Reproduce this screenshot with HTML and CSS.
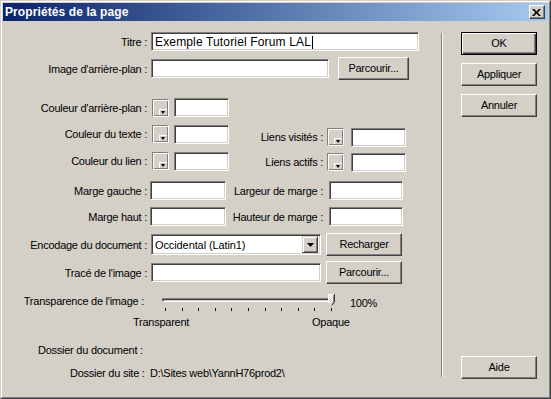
FILE: index.html
```html
<!DOCTYPE html>
<html lang="fr">
<head>
<meta charset="utf-8">
<title>Propriétés de la page</title>
<link rel="stylesheet" href="styles.css">
</head>
<body>
<div class="window">
  <div class="frame">
    <div class="titlebar">
      <span class="title">Propriétés de la page</span>
      <div class="close">
        <svg width="9" height="7" viewBox="0 0 9 7"><path d="M0 0h2.2l2.3 2.4 2.3-2.4H9L5.7 3.5 9 7H6.8L4.5 4.6 2.2 7H0l3.3-3.5z" fill="#000"/></svg>
      </div>
    </div>
    <div class="client">
      <div class="main">
        <div class="row r1">
          <span class="lbl">Titre :</span>
          <div class="field f-title">Exemple Tutoriel Forum LAL<span class="caret"></span></div>
        </div>
        <div class="row r2">
          <span class="lbl">Image d'arrière-plan :</span>
          <div class="field f-img"></div>
          <div class="btn b-browse1">Parcourir...</div>
        </div>
        <div class="row r3">
          <span class="lbl">Couleur d'arrière-plan :</span>
          <div class="swatch"><span class="sw-arrow"></span></div>
          <div class="field f-color"></div>
        </div>
        <div class="row r4 top">
          <span class="lbl">Couleur du texte :</span>
          <div class="swatch"><span class="sw-arrow"></span></div>
          <div class="field f-color"></div>
          <div class="group g-down3">
            <span class="lbl2">Liens visités :</span>
            <div class="swatch"><span class="sw-arrow"></span></div>
            <div class="field f-color f-color2"></div>
          </div>
        </div>
        <div class="row r5 top">
          <span class="lbl">Couleur du lien :</span>
          <div class="swatch"><span class="sw-arrow"></span></div>
          <div class="field f-color"></div>
          <div class="group g-down1">
            <span class="lbl2">Liens actifs :</span>
            <div class="swatch"><span class="sw-arrow"></span></div>
            <div class="field f-color f-color2"></div>
          </div>
        </div>
        <div class="row r6">
          <span class="lbl">Marge gauche :</span>
          <div class="field f-margin"></div>
          <span class="lbl3">Largeur de marge :</span>
          <div class="field f-margin2"></div>
        </div>
        <div class="row r7">
          <span class="lbl">Marge haut :</span>
          <div class="field f-margin"></div>
          <span class="lbl3">Hauteur de marge :</span>
          <div class="field f-margin2"></div>
        </div>
        <div class="row r8">
          <span class="lbl">Encodage du document :</span>
          <div class="field select">
            <span class="sel-text">Occidental (Latin1)</span>
            <span class="sel-btn"><svg width="7" height="4" viewBox="0 0 7 4"><path d="M0 0h7L3.5 4z" fill="#000"/></svg></span>
          </div>
          <div class="btn b-side">Recharger</div>
        </div>
        <div class="row r9">
          <span class="lbl">Tracé de l'image :</span>
          <div class="field f-trace"></div>
          <div class="btn b-side">Parcourir...</div>
        </div>
        <div class="row r10 top">
          <span class="lbl lbl-tr">Transparence de l'image :</span>
          <div class="slider">
            <div class="track"></div>
            <div class="ticks">
              <i></i><i></i><i></i><i></i><i></i><i></i><i></i><i></i><i></i><i></i><i></i>
            </div>
            <svg class="thumb" width="7" height="12" viewBox="0 0 7 12">
              <defs>
                <pattern id="dith" width="2" height="2" patternUnits="userSpaceOnUse">
                  <rect width="2" height="2" fill="#D4D0C8"/>
                  <rect width="1" height="1" fill="#fff"/>
                  <rect x="1" y="1" width="1" height="1" fill="#fff"/>
                </pattern>
              </defs>
              <path d="M0.5 0.5H6.5V8.5L3.5 11.5L0.5 8.5Z" fill="url(#dith)"/>
              <path d="M0.5 9V0.5H6" stroke="#fff" fill="none"/>
              <path d="M6.5 0V8.5L3.5 11.5" stroke="#404040" fill="none"/>
              <path d="M5.5 1V8.2L3.5 10.2" stroke="#808080" fill="none"/>
            </svg>
          </div>
          <span class="pct">100%</span>
        </div>
        <div class="row r11">
          <span class="tl">Transparent</span>
          <span>Opaque</span>
        </div>
        <div class="row r12">
          <span>Dossier du document :</span>
        </div>
        <div class="row r13">
          <span class="site-lbl">Dossier du site :</span>
          <span>D:\Sites web\YannH76prod2\</span>
        </div>
      </div>
      <div class="sep"></div>
      <div class="side">
        <div class="btn btn-default b-r1">OK</div>
        <div class="btn b-r2">Appliquer</div>
        <div class="btn b-r2">Annuler</div>
        <div class="btn b-help">Aide</div>
      </div>
    </div>
  </div>
</div>
</body>
</html>
```

FILE: styles.css
```css
* { box-sizing: border-box; }

html, body {
  margin: 0;
  padding: 0;
  background: #D4D0C8;
}

body {
  font-family: "Liberation Sans", Arial, sans-serif;
  font-size: 11px;
  letter-spacing: -0.25px;
  line-height: 14px;
  color: #000;
}

.window {
  width: 551px;
  height: 399px;
  border: 1px solid;
  border-color: #D4D0C8 #404040 #404040 #D4D0C8;
  background: #D4D0C8;
}

.frame {
  height: 100%;
  border: 1px solid;
  border-color: #fff #808080 #808080 #fff;
  padding: 1px;
  display: flex;
  flex-direction: column;
}

.titlebar {
  height: 18px;
  flex: none;
  background: linear-gradient(to right, #0A246A, #A6CAF0);
  display: flex;
  align-items: center;
  padding: 0 3px 0 2px;
}

.title {
  flex: 1;
  color: #fff;
  font-weight: bold;
  font-size: 12px;
  letter-spacing: 0.1px;
}

.close {
  width: 16px;
  height: 14px;
  background: #D4D0C8;
  border: 1px solid;
  border-color: #fff #404040 #404040 #fff;
  box-shadow: inset -1px -1px #808080;
  display: flex;
  align-items: center;
  justify-content: center;
  padding-right: 1px;
}

.client {
  flex: 1;
  display: flex;
}

.main {
  width: 438px;
  display: flex;
  flex-direction: column;
}

.sep {
  width: 2px;
  margin-top: 12px;
  height: 344px;
  border-left: 1px solid #808080;
  border-right: 1px solid #fff;
}

.side {
  margin-left: 18px;
  display: flex;
  flex-direction: column;
  padding-bottom: 17px;
}

/* rows */
.row { display: flex; align-items: center; }
.row.top { align-items: flex-start; }

.r1 { margin-top: 11px; height: 19px; }
.r2 { margin-top: 6px; height: 23px; }
.r3 { margin-top: 18px; }
.r4 { margin-top: 8px; }
.r5 { margin-top: 5px; }
.r6 { margin-top: 9px; }
.r7 { margin-top: 7px; }
.r8 { margin-top: 7px; height: 23px; }
.r9 { margin-top: 5px; height: 23px; }
.r10 { margin-top: 8px; height: 20px; }
.r11 { margin-top: 3px; padding-left: 130px; }
.r12 { margin-top: 14px; padding-left: 35px; }
.r13 { margin-top: 9px; padding-left: 67px; }

.lbl {
  width: 144px;
  text-align: right;
  white-space: nowrap;
  flex: none;
}

.top > .lbl { margin-top: 2px; }

.lbl-tr { width: 141px; margin-top: 2px; }

.lbl2 {
  width: 94px;
  text-align: right;
  white-space: nowrap;
  margin-top: 2px;
}

.lbl3 {
  width: 97px;
  text-align: right;
  white-space: nowrap;
}

.group { display: flex; align-items: flex-start; }
.g-down3 { margin-top: 3px; }
.g-down1 { margin-top: 1px; }

/* fields */
.field {
  height: 19px;
  flex: none;
  background: #fff;
  border: 1px solid;
  border-color: #808080 #fff #fff #808080;
  box-shadow: inset 1px 1px #404040, inset -1px -1px #D4D0C8;
  padding: 1px 3px 0 3px;
  white-space: nowrap;
  display: flex;
  align-items: center;
}

.f-title {
  width: 268px;
  margin-left: 4px;
  font-size: 12px;
  letter-spacing: 0.15px;
}
.f-img { width: 178px; margin-left: 4px; }
.f-color { width: 55px; margin-left: 5px; }
.f-color2 { margin-left: 7px; }
.f-margin { width: 76px; margin-left: 3px; }
.f-margin2 { width: 74px; margin-left: 6px; }
.f-trace { width: 170px; margin-left: 4px; }

.caret {
  display: inline-block;
  width: 1px;
  height: 13px;
  background: #000;
  margin-left: 1px;
}

.select {
  width: 170px;
  height: 21px;
  margin-left: 4px;
  padding: 2px 2px 2px 3px;
}

.sel-text { flex: 1; letter-spacing: -0.1px; }

.sel-btn {
  width: 16px;
  height: 17px;
  background: #D4D0C8;
  border: 1px solid;
  border-color: #D4D0C8 #404040 #404040 #D4D0C8;
  box-shadow: inset 1px 1px #fff, inset -1px -1px #808080;
  display: flex;
  align-items: center;
  justify-content: center;
}

/* swatch */
.swatch {
  width: 17px;
  height: 18px;
  margin-left: 5px;
  flex: none;
  position: relative;
  border: 1px solid;
  border-color: #808080 #fff #fff #808080;
  box-shadow: inset 1px 1px #fff, inset -1px -1px #808080;
  background: #D4D0C8;
}

.group .swatch { margin-left: 4px; }

.sw-arrow {
  position: absolute;
  right: 1px;
  bottom: 1px;
  width: 8px;
  height: 6px;
  background: #D4D0C8;
  border-top: 1px solid #fff;
  border-left: 1px solid #fff;
}

.sw-arrow::after {
  content: "";
  position: absolute;
  left: 1px;
  top: 1px;
  border-left: 2.5px solid transparent;
  border-right: 2.5px solid transparent;
  border-top: 3px solid #000;
}

/* buttons */
.btn {
  height: 23px;
  flex: none;
  background: #D4D0C8;
  border: 1px solid;
  border-color: #fff #404040 #404040 #fff;
  box-shadow: inset -1px -1px #808080;
  display: flex;
  align-items: center;
  justify-content: center;
  white-space: nowrap;
  padding-bottom: 1px;
}

.btn-default {
  border-color: #000;
  box-shadow: inset 1px 1px #fff, inset -1px -1px #404040, inset -2px -2px #808080;
}

.b-browse1 { width: 71px; margin-left: 9px; }
.b-side { width: 76px; margin-left: 5px; }

.side .btn { width: 76px; }
.b-r1 { margin-top: 11px; }
.b-r2 { margin-top: 8px; }
.b-help { margin-top: auto; }

/* slider */
.slider {
  position: relative;
  width: 172px;
  height: 20px;
  margin-left: 18px;
  flex: none;
}

.track {
  margin-top: 6px;
  height: 4px;
  border: 1px solid;
  border-color: #808080 #fff #fff #808080;
  box-shadow: inset 1px 1px #404040, inset -1px -1px #D4D0C8;
}

.ticks {
  margin-top: 6px;
  margin-left: 3px;
  width: 167px;
  height: 3px;
  display: flex;
  justify-content: space-between;
}

.ticks i {
  width: 1px;
  height: 3px;
  background: #000;
}

.thumb {
  position: absolute;
  left: 166px;
  top: 2px;
}

.pct { margin-left: 16px; margin-top: 4px; }

.tl { width: 179px; }

.site-lbl { width: 80px; }
```
